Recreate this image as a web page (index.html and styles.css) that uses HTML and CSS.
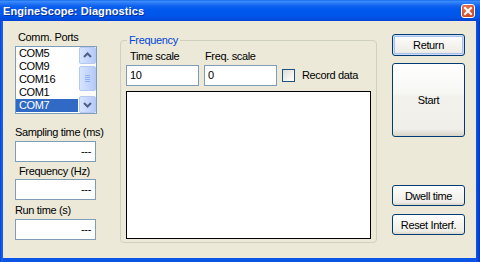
FILE: index.html
```html
<!DOCTYPE html>
<html>
<head>
<meta charset="utf-8">
<link rel="stylesheet" href="styles.css">
</head>
<body>
<div class="window">
  <div class="titlebar">
    <span class="title">EngineScope: Diagnostics</span>
    <span class="close"><svg width="12" height="12" viewBox="0 0 12 12"><path d="M3 3 L9 9 M9 3 L3 9" stroke="#fff" stroke-width="2" stroke-linecap="square"/></svg></span>
  </div>
  <div class="client">
    <div class="leftcol">
      <div class="lbl lbl-ports">Comm. Ports</div>
      <div class="listbox">
        <div class="items">
          <div class="item">COM5</div>
          <div class="item">COM9</div>
          <div class="item">COM16</div>
          <div class="item">COM1</div>
          <div class="item selected">COM7</div>
        </div>
        <div class="scrollbar">
          <div class="sbtn"><svg width="15" height="15" viewBox="0 0 15 15"><path d="M4 9 L7.5 5.5 L11 9" fill="none" stroke="#4D6185" stroke-width="2"/></svg></div>
          <div class="thumb"><svg width="15" height="23" viewBox="0 0 15 23"><path d="M5 8.5 H10 M5 10.5 H10 M5 12.5 H10 M5 14.5 H10" stroke="#8CB0F8" stroke-width="1"/></svg></div>
          <div class="sbtn"><svg width="15" height="15" viewBox="0 0 15 15"><path d="M4 6 L7.5 9.5 L11 6" fill="none" stroke="#4D6185" stroke-width="2"/></svg></div>
        </div>
      </div>
      <div class="lbl lbl-sampling">Sampling time (ms)</div>
      <div class="field field-sampling">---</div>
      <div class="lbl lbl-freq">Frequency (Hz)</div>
      <div class="field field-freq">---</div>
      <div class="lbl lbl-run">Run time (s)</div>
      <div class="field field-run">---</div>
    </div>
    <fieldset class="group">
      <legend class="legend">Frequency</legend>
      <div class="controls">
        <div class="ctl">
          <div class="lbl lbl-time">Time scale</div>
          <div class="field left">10</div>
        </div>
        <div class="ctl ctl2">
          <div class="lbl lbl-fscale">Freq. scale</div>
          <div class="field left">0</div>
        </div>
        <div class="check">
          <span class="box"></span>
          <span class="lbl">Record data</span>
        </div>
      </div>
      <div class="plot"></div>
    </fieldset>
    <div class="rightcol">
      <div class="btn btn-default">Return</div>
      <div class="btn btn-start">Start</div>
      <div class="btn btn-dwell">Dwell time</div>
      <div class="btn btn-reset">Reset Interf.</div>
    </div>
  </div>
</div>
</body>
</html>
```

FILE: styles.css
```css
html, body {
  margin: 0;
  padding: 0;
  width: 480px;
  height: 262px;
  overflow: hidden;
  background: #0050DE;
}
.window {
  width: 480px;
  height: 262px;
  display: flex;
  flex-direction: column;
  background: linear-gradient(90deg, #0A3ED6 0px, #1A6AF0 2px, #0A55E6 3px, #0A55E6 476px, #0848D8 478px, #0332BE 480px);
  font-family: "Liberation Sans", Arial, sans-serif;
  font-size: 11px;
  letter-spacing: -0.35px;
  color: #000;
}
.titlebar {
  height: 21px;
  flex: none;
  display: flex;
  align-items: center;
  padding-left: 3px;
  padding-right: 5px;
  background: linear-gradient(#0A5BE8 0px, #3D8FFB 1px, #2C7BF7 3px, #0E62EE 6px, #0058EE 10px, #0056EA 16px, #0049DA 20px, #0040CF 21px);
}
.title {
  flex: 1;
  color: #fff;
  font-weight: bold;
  font-size: 11px;
  letter-spacing: 0.1px;
  text-shadow: 1px 1px 0 #0B2E9A;
  padding-top: 1px;
}
.close {
  width: 12px;
  height: 12px;
  margin-top: 1px;
  border: 1px solid #fff;
  border-radius: 3px;
  background: radial-gradient(circle at 35% 30%, #E9825F 0%, #D9512E 55%, #C4401E 100%);
  display: flex;
}
.client {
  flex: 1;
  margin: 0 4px 4px 3px;
  background: #ECE9D8;
  display: flex;
  align-items: flex-start;
}
.lbl {
  line-height: 13px;
  white-space: nowrap;
}
.leftcol {
  margin-left: 12px;
  width: 82px;
  display: flex;
  flex-direction: column;
}
.lbl-ports { margin-top: 10px; padding-left: 3px; }
.listbox {
  margin-top: 2px;
  height: 66px;
  border: 1px solid #7F9DB9;
  background: #fff;
  display: flex;
}
.items {
  flex: 1;
  padding-right: 1px;
}
.item {
  height: 13px;
  line-height: 13px;
  padding-left: 3px;
}
.item.selected {
  background: #316AC5;
  color: #fff;
}
.scrollbar {
  width: 17px;
  display: flex;
  flex-direction: column;
  background: #FBFBF8;
  justify-content: space-between;
}
.sbtn, .thumb {
  width: 15px;
  border: 1px solid #B4C8F6;
  border-radius: 2px;
  background: linear-gradient(90deg, #D7E4FE, #C3D5FD 60%, #B6CAF8);
  display: flex;
}
.sbtn { height: 15px; }
.thumb { height: 23px; margin-top: -3px; }
.lbl-sampling { margin-top: 12px; }
.field {
  height: 19px;
  width: 79px;
  border: 1px solid #7F9DB9;
  background: #fff;
  line-height: 19px;
  text-align: right;
  box-sizing: content-box;
}
.leftcol .field { width: 75px; padding-right: 4px; }
.field-sampling { margin-top: 2px; }
.lbl-freq { margin-top: 3px; padding-left: 4px; }
.field-freq { margin-top: 1px; }
.lbl-run { margin-top: 4px; }
.field-run { margin-top: 2px; }

.group {
  margin: 13px 0 0 23px;
  padding: 0 5px 3px 5px;
  width: 245px;
  border: 1px solid #D0D0BF;
  border-radius: 4px;
  min-inline-size: 0;
}
.legend {
  color: #0046D5;
  padding: 0 2px;
  margin-left: 1px;
  line-height: 13px;
}
.controls {
  display: flex;
  align-items: flex-end;
  margin-top: 3px;
}
.ctl {
  display: flex;
  flex-direction: column;
  gap: 2px;
}
.ctl2 { margin-left: 5px; }
.lbl-time { padding-left: 4px; }
.lbl-fscale { padding-left: 1px; }
.field.left {
  width: 68px;
  padding-left: 3px;
  text-align: left;
}
.check {
  display: flex;
  align-items: center;
  margin-left: 5px;
  height: 21px;
}
.box {
  width: 11px;
  height: 11px;
  border: 1px solid #1C5180;
  background: linear-gradient(135deg, #DCDCD7, #F3F3EF 60%, #FFFFFF);
  margin-right: 7px;
}
.plot {
  margin-top: 5px;
  height: 146px;
  border: 1px solid #000;
  background: #fff;
}
.rightcol {
  margin-left: 15px;
  width: 73px;
  display: flex;
  flex-direction: column;
  margin-top: 13px;
}
.btn {
  box-sizing: border-box;
  border: 1px solid #003C74;
  border-radius: 3px;
  background: linear-gradient(#FFFFFF, #F6F5F1 40%, #EEEDE7 85%, #D8D4C8);
  display: flex;
  align-items: center;
  justify-content: center;
  height: 21px;
}
.btn-default {
  height: 22px;
  box-shadow: inset 0 0 0 1px #CEDCF8, inset 0 0 0 2px #A9C1F2;
}
.btn-start {
  margin-top: 7px;
  height: 74px;
  background: linear-gradient(#FFFFFF, #F7F7F4 40%, #F2F1EC 45%, #F0EFEA 90%, #D8D4C8);
}
.btn-dwell { margin-top: 48px; }
.btn-reset { margin-top: 8px; }
```
